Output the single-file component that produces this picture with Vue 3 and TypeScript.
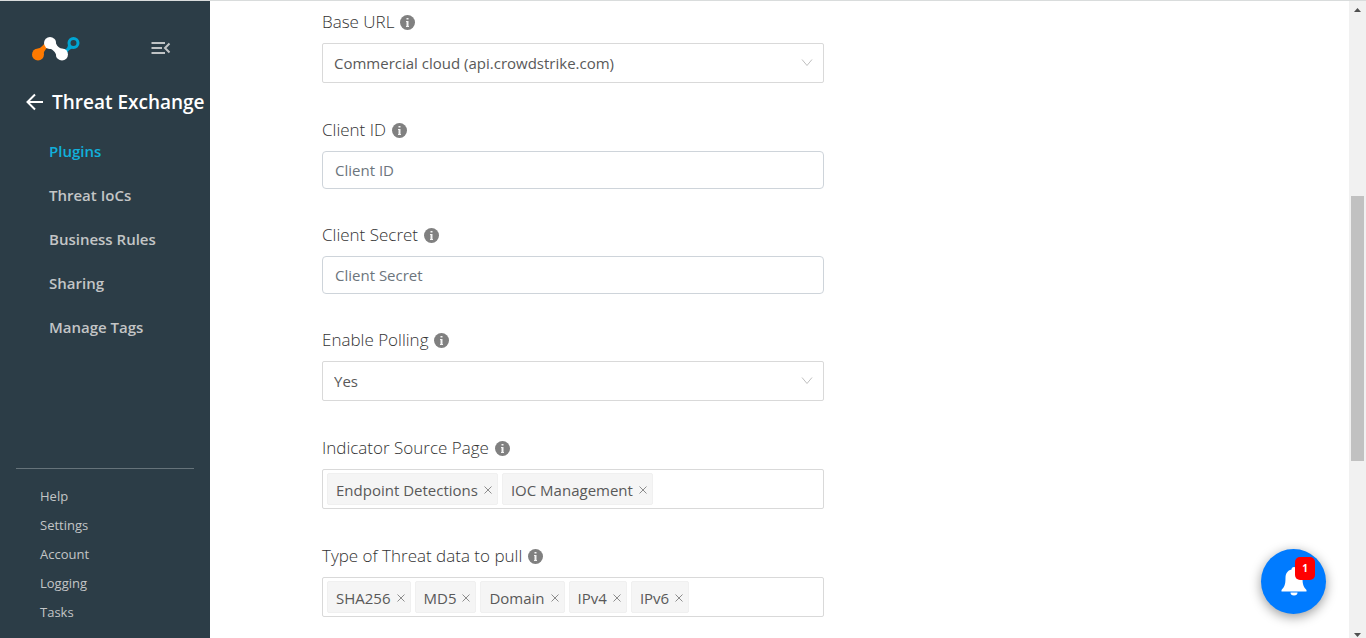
<script setup lang="ts">
import { ref } from 'vue'

interface Field {
  id: string
  label: string
  kind: 'select' | 'text' | 'tags'
  options?: string[]
  tags?: string[]
}

const navItems: string[] = ['Plugins', 'Threat IoCs', 'Business Rules', 'Sharing', 'Manage Tags']
const footerItems: string[] = ['Help', 'Settings', 'Account', 'Logging', 'Tasks']
const activeItem = ref('Plugins')

const fields = ref<Field[]>([
  { id: 'base-url', label: 'Base URL', kind: 'select', options: ['Commercial cloud (api.crowdstrike.com)'] },
  { id: 'client-id', label: 'Client ID', kind: 'text' },
  { id: 'client-secret', label: 'Client Secret', kind: 'text' },
  { id: 'polling', label: 'Enable Polling', kind: 'select', options: ['Yes', 'No'] },
  { id: 'source-page', label: 'Indicator Source Page', kind: 'tags', tags: ['Endpoint Detections', 'IOC Management'] },
  { id: 'data-type', label: 'Type of Threat data to pull', kind: 'tags', tags: ['SHA256', 'MD5', 'Domain', 'IPv4', 'IPv6'] },
])

function removeTag(field: Field, tag: string): void {
  field.tags = field.tags?.filter((t) => t !== tag)
}
</script>

<template>
  <div class="app">
    <aside class="sidebar">
      <div class="brand">
        <svg class="logo" width="50" height="26" viewBox="0 0 50 26" aria-hidden="true">
          <path d="M3 14 C8 13 11 11 13.500 7.500 L17 11 C13.500 14 12 17 11.500 22 Z" fill="#ff7a00" />
          <circle cx="7" cy="18.500" r="6" fill="#ff7a00" />
          <path d="M37 8 C37 11 36 13 32.500 14 L36 17.500 C37 14.500 39 13 43 12 Z" fill="#00a5d3" />
          <circle cx="42.500" cy="7" r="4.500" fill="#2c3d47" stroke="#00a5d3" stroke-width="3" />
          <path d="M15.500 12 C21 12.500 25 15 26 22.500 L34.500 13.500 C29 13 25 11 24 3 Z" fill="#fff" />
          <circle cx="19" cy="7" r="6" fill="#fff" />
          <circle cx="31" cy="18.500" r="6" fill="#fff" />
        </svg>
        <button class="icon-button" type="button" aria-label="Collapse menu">
          <svg width="20" height="14" viewBox="0 0 20 14" fill="none" stroke="#c0c3c5" stroke-width="2">
            <path d="M0.500 2H14M0.500 7H11M0.500 12H14" />
            <path d="M18.500 2.500L14 7L18.500 11.500" />
          </svg>
        </button>
      </div>
      <a class="back" href="#">
        <svg width="18" height="18" viewBox="0 0 18 18" fill="none" stroke="#fff" stroke-width="2">
          <path d="M17 9H2M9 1.500L1.500 9L9 16.500" />
        </svg>
        <span>Threat Exchange</span>
      </a>
      <nav class="nav">
        <a
          v-for="item in navItems"
          :key="item"
          href="#"
          :class="{ active: item === activeItem }"
          @click.prevent="activeItem = item"
        >{{ item }}</a>
      </nav>
      <nav class="footer-nav">
        <a v-for="item in footerItems" :key="item" href="#">{{ item }}</a>
      </nav>
    </aside>

    <main class="content">
      <form class="form" @submit.prevent>
        <div v-for="field in fields" :key="field.id" class="field" :class="field.kind">
          <div class="label-row">
            <label :for="field.id">{{ field.label }}</label>
            <svg class="info" width="15" height="15" viewBox="0 0 15 15" aria-hidden="true">
              <circle cx="7.500" cy="7.500" r="7.500" fill="#808080" />
              <path d="M6.500 3h2v1.500h-2zM6 6h2.500v5h0.500v1h-3v-1h0.500v-4h-0.500z" fill="#f4f4f4" />
            </svg>
          </div>
          <div v-if="field.kind === 'select'" class="select-wrap">
            <select :id="field.id">
              <option v-for="option in field.options" :key="option">{{ option }}</option>
            </select>
            <svg class="chevron" width="12" height="8" viewBox="0 0 12 8" fill="none" stroke="#bfbfbf">
              <path d="M1 0.500L6 6.500L11 0.500" />
            </svg>
          </div>
          <input v-else-if="field.kind === 'text'" :id="field.id" class="text-input" type="text" :placeholder="field.label" />
          <div v-else class="tag-box">
            <span v-for="tag in field.tags" :key="tag" class="tag">
              {{ tag }}
              <button type="button" :aria-label="`Remove ${tag}`" @click="removeTag(field, tag)">
                <svg width="8" height="8" viewBox="0 0 8 8" fill="none" stroke="#8c8c8c">
                  <path d="M0.500 0.500L7.500 7.500M7.500 0.500L0.500 7.500" />
                </svg>
              </button>
            </span>
            <input :id="field.id" type="text" />
          </div>
        </div>
      </form>
    </main>

    <div class="scrollbar" aria-hidden="true">
      <svg width="7" height="4" viewBox="0 0 7 4"><path d="M0 4L3.500 0L7 4Z" fill="#505050" /></svg>
      <div class="track"><div class="thumb"></div></div>
      <svg width="7" height="4" viewBox="0 0 7 4"><path d="M0 0L3.500 4L7 0Z" fill="#505050" /></svg>
    </div>

    <button class="bell" type="button" aria-label="Notifications">
      <svg width="26" height="30" viewBox="0 1 26 30" fill="#fff">
        <path d="M13 1a2.500 2.500 0 0 0-2.500 2.500C6.500 4.500 4.500 7.500 4.500 11.500C4.500 19 3.500 20.500 0.500 24V25.500H25.500V24C22.500 20.500 21.500 19 21.500 11.500C21.500 7.500 19.500 4.500 15.500 3.500A2.500 2.500 0 0 0 13 1Z" />
        <path d="M9.500 26.500H16.500A3.500 3 0 0 1 9.500 26.500Z" />
      </svg>
      <span class="badge">1</span>
    </button>
  </div>
</template>

<style>
body {
  margin: 0;
}
</style>

<style scoped>
.app {
  box-sizing: border-box;
  display: flex;
  height: 100vh;
  overflow: hidden;
  border-top: 1px solid #d9dcdc;
  background: #fff;
  color: #595959;
  font-family: "Open Sans", "Noto Sans", sans-serif;
}
.app * {
  box-sizing: border-box;
}
button,
input,
select {
  font-family: inherit;
}
a {
  text-decoration: none;
}
.sidebar {
  display: flex;
  flex: 0 0 210px;
  flex-direction: column;
  background: #2c3d47;
  color: #c3c5c6;
}
.brand {
  display: flex;
  align-items: center;
  justify-content: space-between;
  padding: 35px 39px 0 31px;
}
.logo {
  display: block;
}
.icon-button {
  display: flex;
  padding: 0 0 2px;
  border: 0;
  background: none;
}
.back {
  display: flex;
  align-items: center;
  gap: 8px;
  padding: 26px 0 0 26px;
  color: #fff;
  font-size: 19px;
  font-weight: 600;
  line-height: 28px;
  white-space: nowrap;
}
.back svg {
  flex: none;
}
.nav {
  display: flex;
  flex-direction: column;
  padding: 13px 0 0 49px;
}
.nav a {
  color: inherit;
  font-size: 15px;
  font-weight: 600;
  line-height: 44px;
}
.nav a.active {
  color: #11b0dc;
}
.footer-nav {
  display: flex;
  flex-direction: column;
  margin: auto 16px 0;
  padding: 13px 24px 11px;
  border-top: 1px solid #66737a;
}
.footer-nav a {
  color: inherit;
  font-size: 13px;
  line-height: 29px;
}
.content {
  flex: 1;
  min-width: 0;
  padding: 6px 112px 0;
}
.form {
  max-width: 502px;
}
.field {
  margin-bottom: 32px;
}
.field.text {
  margin-bottom: 31px;
}
.label-row {
  display: flex;
  align-items: center;
  gap: 6px;
  height: 28px;
  margin-bottom: 8px;
  color: #333;
  font-size: 17px;
  font-weight: 300;
  white-space: nowrap;
}
.info {
  margin-top: 2px;
}
.select-wrap {
  display: grid;
  align-items: center;
}
.select-wrap > * {
  grid-area: 1 / 1;
}
.select-wrap select {
  width: 100%;
  height: 40px;
  padding: 0 30px 0 11px;
  appearance: none;
  border: 1px solid #d9d9d9;
  border-radius: 2px;
  background: #fff;
  color: #595959;
  font-size: 15px;
}
.chevron {
  justify-self: end;
  margin-right: 11px;
  pointer-events: none;
}
.text-input {
  display: block;
  width: 100%;
  height: 38px;
  padding: 0 12px;
  border: 1px solid #ced4da;
  border-radius: 4px;
  color: #495057;
  font-size: 15px;
}
.text-input::placeholder {
  color: #6c757d;
}
.tag-box {
  display: flex;
  gap: 4px;
  height: 40px;
  padding: 3px 4px;
  border: 1px solid #d9d9d9;
  border-radius: 2px;
}
.tag {
  display: flex;
  align-items: center;
  gap: 6px;
  height: 32px;
  padding: 1px 5px 0 8px;
  border: 1px solid #f0f0f0;
  border-radius: 2px;
  background: #f5f5f5;
  font-size: 15px;
  white-space: nowrap;
}
.tag button {
  display: flex;
  padding: 0;
  border: 0;
  background: none;
}
.tag-box input {
  flex: 1;
  width: 0;
  min-width: 0;
  padding: 0;
  border: 0;
  outline: 0;
  background: none;
  font-size: 15px;
}
.scrollbar {
  display: flex;
  flex: 0 0 17px;
  flex-direction: column;
  align-items: center;
  padding: 7px 0 1px;
  background: #f1f1f1;
}
.track {
  flex: 1;
  width: 13px;
  padding-top: 184px;
}
.thumb {
  height: 265px;
  background: #c1c1c1;
}
.bell {
  position: fixed;
  right: 40px;
  bottom: 24px;
  display: flex;
  align-items: center;
  justify-content: center;
  width: 65px;
  height: 65px;
  padding: 0;
  border: 0;
  border-radius: 50%;
  background: #007bff;
  box-shadow: 0 3px 12px rgba(0, 0, 0, 0.4);
}
.badge {
  position: absolute;
  top: 8px;
  right: 11px;
  width: 20px;
  height: 23px;
  border-radius: 5px;
  background: #f00;
  color: #fff;
  font-size: 10px;
  font-weight: 700;
  line-height: 23px;
  text-align: center;
}
</style>
